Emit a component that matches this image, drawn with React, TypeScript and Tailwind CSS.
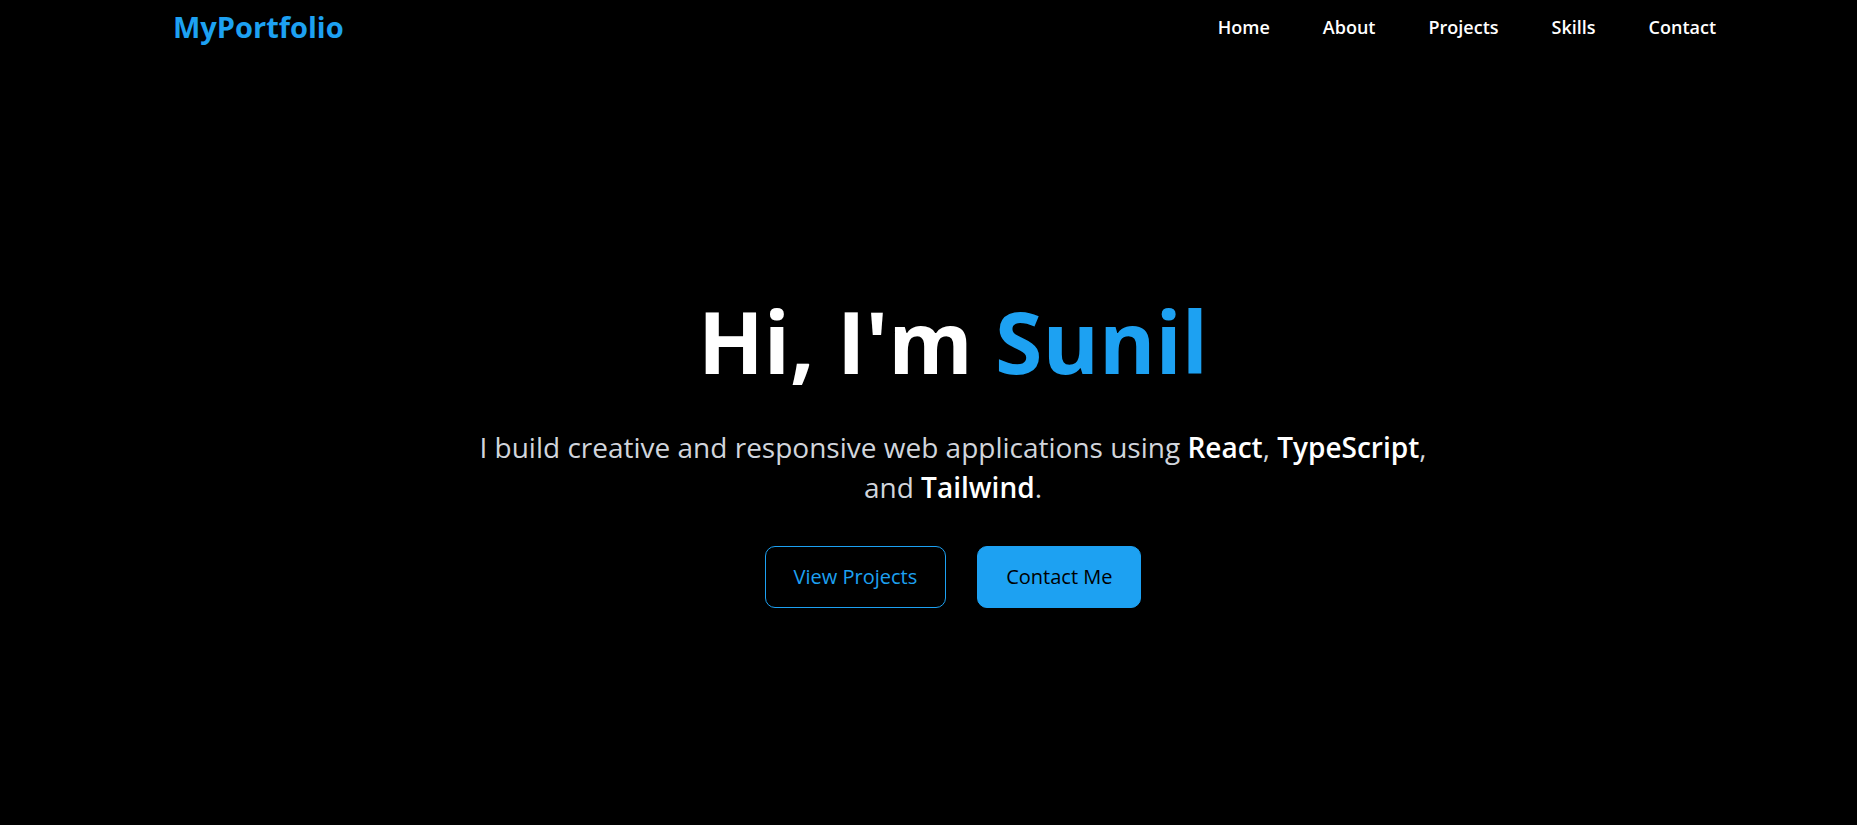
import React from 'react';

const links = ['Home', 'About', 'Projects', 'Skills', 'Contact'];

const Navbar: React.FC = () => {
  return (
    <header className="flex h-[54px] items-center justify-between pl-[173px] pr-[141px]">
      <a href="#home" className="text-[29px] font-bold text-[#1da1f2]">
        MyPortfolio
      </a>
      <nav className="flex items-center gap-[53px]">
        {links.map((link) => (
          <a key={link} href={`#${link.toLowerCase()}`} className="text-lg font-semibold text-white">
            {link}
          </a>
        ))}
      </nav>
    </header>
  );
};

const Hero: React.FC = () => {
  return (
    <section id="home" className="flex flex-col items-center pl-[49px] pt-[243px] text-center">
      <h1 className="text-[86px] font-bold leading-[88px] text-white">
        Hi, I'm <span className="text-[#1da1f2]">Sunil</span>
      </h1>
      <p className="mt-[42px] max-w-[980px] text-[28px] leading-[40px] text-gray-300">
        <span>I build creative and responsive web applications using </span>
        <strong className="font-semibold text-white">React</strong>
        <span>, </span>
        <strong className="font-semibold text-white">TypeScript</strong>
        <span>,</span>
        <br />
        <span>and </span>
        <strong className="font-semibold text-white">Tailwind</strong>
        <span>.</span>
      </p>
      <div className="mt-[39px] flex items-center gap-[31px]">
        <a
          href="#projects"
          className="rounded-[10px] border border-[#1da1f2] px-[28px] py-4 text-xl leading-7 text-[#1da1f2]"
        >
          View Projects
        </a>
        <a
          href="#contact"
          className="rounded-[10px] border border-[#1da1f2] bg-[#1da1f2] px-[28px] py-4 text-xl leading-7 text-black"
        >
          Contact Me
        </a>
      </div>
    </section>
  );
};

export default function App() {
  return (
    <div className="min-h-screen bg-black font-['Open_Sans',sans-serif]">
      <Navbar />
      <Hero />
    </div>
  );
}
